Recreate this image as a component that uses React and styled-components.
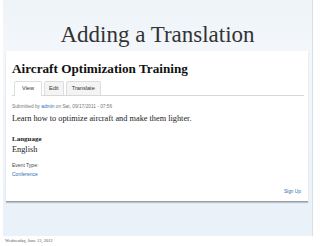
import React from 'react'
import styled, { createGlobalStyle } from 'styled-components'

const Global = createGlobalStyle`
  html, body { margin: 0; padding: 0; background: #fff; }
  body { width: 320px; height: 246px; overflow: hidden; }
`

const Slide = styled.div`
  margin-left: 3px;
  width: 310px;
  height: 236px;
  box-sizing: border-box;
  border-right: 1px solid #d6dee8;
  background: linear-gradient(180deg, #eef3f8 0%, #f3f7fb 20%, #e9f1f9 100%);
  display: flex;
  flex-direction: column;
`

const Title = styled.h1`
  margin: 0;
  height: 51px;
  box-sizing: border-box;
  padding-top: 23px;
  text-align: center;
  font-family: "Liberation Serif", serif;
  font-weight: normal;
  font-size: 23px;
  line-height: 23px;
  color: #333;
`

const Panel = styled.div`
  margin-left: 3px;
  width: 302px;
  height: 151px;
  box-sizing: border-box;
  background: #fff;
  border-bottom: 1px solid #9aa0a6;
  box-shadow: 0 1px 1px rgba(0, 0, 0, 0.2);
  padding: 10px 4px 0 6px;
  display: flex;
  flex-direction: column;
`

const NodeTitle = styled.h2`
  margin: 0;
  font-family: "Liberation Serif", serif;
  font-weight: bold;
  font-size: 13.2px;
  line-height: 15px;
  color: #111;
`

const Tabs = styled.div`
  display: flex;
  gap: 2px;
  margin-top: 5px;
  padding-left: 2px;
  border-bottom: 1px solid #d8d8d8;
`

const Tab = styled.div`
  font-family: "Liberation Sans", sans-serif;
  font-size: 5.6px;
  line-height: 7px;
  color: #333;
  padding: 3px ${({ pad }) => pad}px;
  border: 1px solid #ddd;
  border-bottom: none;
  border-radius: 2px 2px 0 0;
  background: ${({ active }) => (active ? '#fff' : '#f4f4f4')};
  margin-bottom: ${({ active }) => (active ? '-1px' : '0')};
`

const Meta = styled.div`
  margin-top: 8px;
  font-family: "Liberation Sans", sans-serif;
  font-size: 4.8px;
  color: #777;
`

const Link = styled.span`
  color: #2a6fb5;
`

const Body = styled.p`
  margin: 5px 0 0;
  font-family: "Liberation Serif", serif;
  font-size: 8.3px;
  color: #222;
`

const FieldLabel = styled.div`
  margin-top: 12px;
  font-family: "Liberation Serif", serif;
  font-weight: bold;
  font-size: 7px;
  color: #222;
`

const FieldValue = styled.div`
  margin-top: 2px;
  font-family: "Liberation Serif", serif;
  font-size: 8.3px;
  color: #222;
`

const SmallLabel = styled.div`
  margin-top: 8px;
  font-family: "Liberation Sans", sans-serif;
  font-size: 5px;
  color: #444;
`

const SmallLink = styled.div`
  margin-top: 3px;
  font-family: "Liberation Sans", sans-serif;
  font-size: 5px;
  color: #2a6fb5;
`

const SignUp = styled.div`
  margin-top: 12px;
  align-self: flex-end;
  padding-right: 3px;
  font-family: "Liberation Sans", sans-serif;
  font-size: 4.8px;
  color: #2a6fb5;
`

const Footer = styled.div`
  padding: 2px 0 0 5px;
  font-family: "Liberation Serif", serif;
  font-size: 4.5px;
  color: #555;
`

export default function App() {
  return (
    <>
      <Global />
      <Slide>
        <Title>Adding a Translation</Title>
        <Panel>
          <NodeTitle>Aircraft Optimization Training</NodeTitle>
          <Tabs>
            <Tab active pad={7}>View</Tab>
            <Tab pad={4}>Edit</Tab>
            <Tab pad={5}>Translate</Tab>
          </Tabs>
          <Meta>
            Submitted by <Link>admin</Link> on Sat, 09/17/2011 - 07:56
          </Meta>
          <Body>Learn how to optimize aircraft and make them lighter.</Body>
          <FieldLabel>Language</FieldLabel>
          <FieldValue>English</FieldValue>
          <SmallLabel>Event Type:</SmallLabel>
          <SmallLink>Conference</SmallLink>
          <SignUp>Sign Up</SignUp>
        </Panel>
      </Slide>
      <Footer>Wednesday, June 13, 2012</Footer>
    </>
  )
}
